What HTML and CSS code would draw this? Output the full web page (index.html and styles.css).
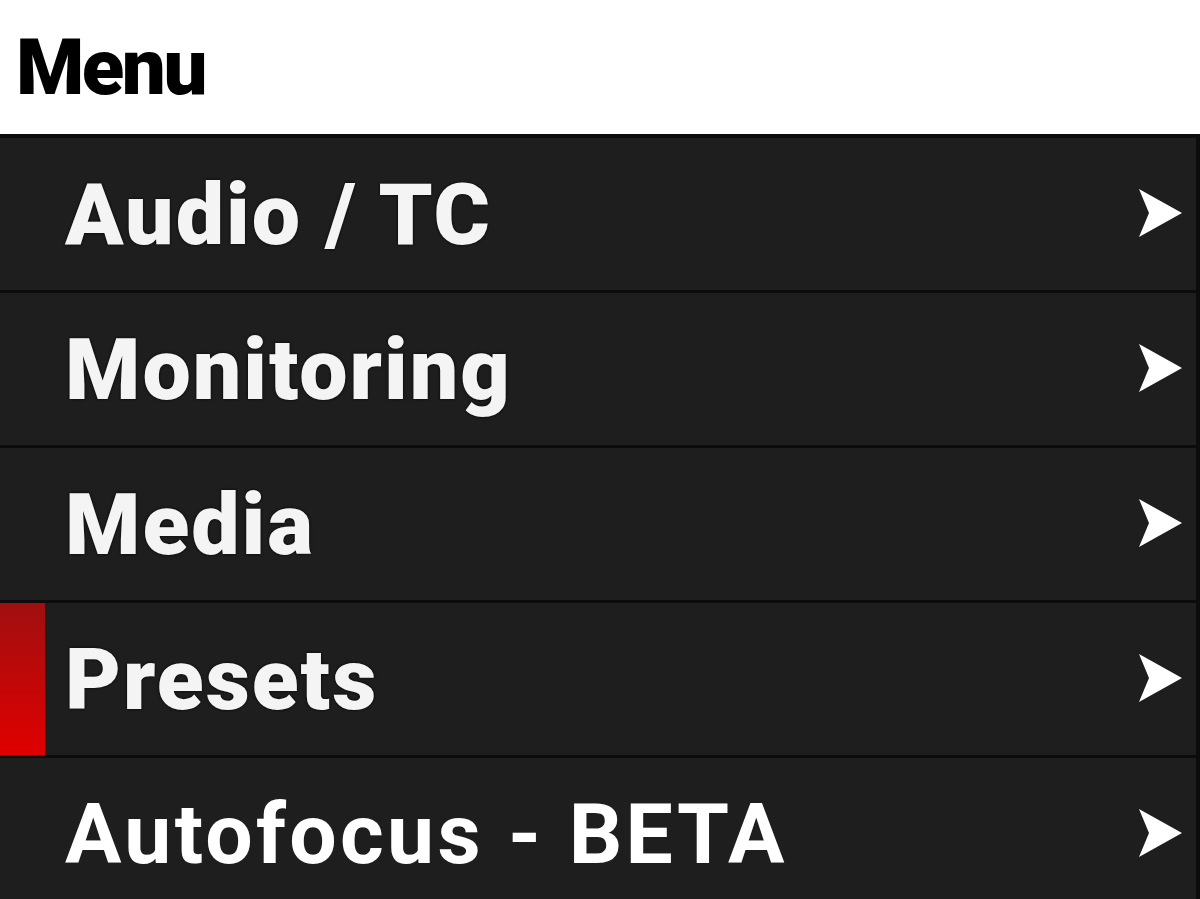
FILE: index.html
```html
<!DOCTYPE html>
<html lang="en">
<head>
    <meta charset="UTF-8">
    <meta name="viewport" content="width=device-width, initial-scale=1.0">
    <title>Menu</title>
    <link rel="stylesheet" href="styles.css">
</head>
<body>
    <h1 class="title">Menu</h1>
    <ul class="menu">
        <li class="item">
            <span class="marker"></span>
            <span class="label">Audio / TC</span>
            <svg class="chevron" viewBox="0 0 46 50"><path d="M2 0 L45 24 L2 48 L12 24 Z"/></svg>
        </li>
        <li class="item">
            <span class="marker"></span>
            <span class="label">Monitoring</span>
            <svg class="chevron" viewBox="0 0 46 50"><path d="M2 0 L45 24 L2 48 L12 24 Z"/></svg>
        </li>
        <li class="item">
            <span class="marker"></span>
            <span class="label">Media</span>
            <svg class="chevron" viewBox="0 0 46 50"><path d="M2 0 L45 24 L2 48 L12 24 Z"/></svg>
        </li>
        <li class="item active">
            <span class="marker"></span>
            <span class="label">Presets</span>
            <svg class="chevron" viewBox="0 0 46 50"><path d="M2 0 L45 24 L2 48 L12 24 Z"/></svg>
        </li>
        <li class="item beta">
            <span class="marker"></span>
            <span class="label">Autofocus - BETA</span>
            <svg class="chevron" viewBox="0 0 46 50"><path d="M2 0 L45 24 L2 48 L12 24 Z"/></svg>
        </li>
    </ul>
</body>
</html>
```

FILE: styles.css
```css
body {
    margin: 0;
    background-color: #FFFFFF;
    font-family: Roboto, "Liberation Sans", sans-serif;
    overflow: hidden;
}
.title {
    margin: 0;
    height: 134px;
    padding-left: 16px;
    font-size: 78px;
    font-weight: 900;
    line-height: 136px;
    color: #000000;
    letter-spacing: -2.5px;
}
.menu {
    list-style: none;
    margin: 0;
    padding: 0;
    background-color: #0c0c0c;
    border-top: 4px solid #0c0c0c;
}
.item {
    display: grid;
    grid-template-columns: 65px 1fr auto;
    align-items: center;
    height: 152px;
    margin-bottom: 3px;
    background-color: #1e1e1e;
    border-right: 4px solid #0c0c0c;
}
.marker {
    align-self: stretch;
    width: 45px;
}
.active .marker {
    background: linear-gradient(#a00f10, #e00000);
}
.label {
    color: #F4F4F4;
    font-size: 86px;
    font-weight: 900;
    letter-spacing: 2px;
    text-shadow: 0 0 3px #000000;
}
.beta .label {
    color: #FFFFFF;
    font-size: 84px;
    font-weight: 700;
    letter-spacing: 3.3px;
    text-shadow: none;
}
.chevron {
    width: 46px;
    height: 50px;
    margin-right: 13px;
    fill: #FFFFFF;
}
```
